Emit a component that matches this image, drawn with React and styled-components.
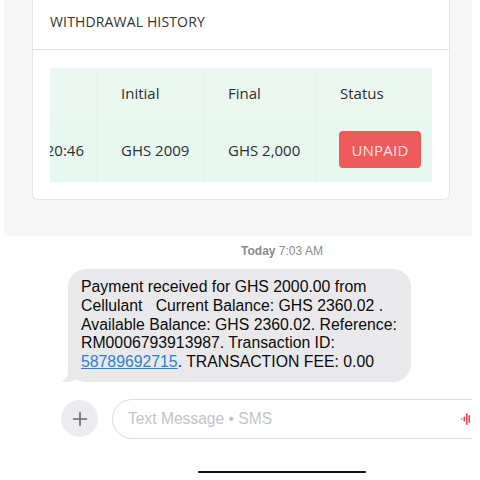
// Packages
import React from "react"
import styled, { createGlobalStyle } from "styled-components"

// Styles
const GlobalStyle = createGlobalStyle`
    html, body {
        margin: 0;
        padding: 0;
        background: #ffffff;
    }
`

const Screen = styled.div`
    width: 468px;
    height: 480px;
    margin-left: 4px;
    overflow: hidden;
    display: flex;
    flex-direction: column;
`

const WebPanel = styled.section`
    background: #f7f7f7;
    padding: 0 22px 36px 28px;
`

const Card = styled.div`
    background: #ffffff;
    border: 1px solid #e6e6e6;
    border-top: none;
    border-radius: 0 0 6px 6px;
    font-family: "Open Sans", "Liberation Sans", sans-serif;
    color: #2e2e2e;
`

const CardHeader = styled.h2`
    margin: 0;
    padding: 14px 17px 19px;
    font-size: 14px;
    line-height: 16px;
    font-weight: 400;
    letter-spacing: 0.15px;
    color: #333333;
    border-bottom: 1px solid #e2e2e2;
`

const CardBody = styled.div`
    padding: 18px 17px 17px;
`

const TableScroll = styled.div`
    display: flex;
    justify-content: flex-end;
    overflow: hidden;
    background: #e7f8f0;
`

const Table = styled.div`
    flex-shrink: 0;
    display: grid;
    grid-template-columns: auto 107px 112px 116px;
    grid-template-rows: 49px 65px;
`

const Cell = styled.div`
    display: flex;
    align-items: center;
    padding: ${(props) => (props.first ? "0 12px 0 24px" : "0 0 0 24px")};
    font-size: 15px;
    white-space: nowrap;
    color: #2e2e2e;
    border-right: 1px solid rgba(0, 80, 40, ${(props) => (props.last ? 0 : 0.025)});
    background: ${(props) => (props.head ? "rgba(255, 255, 255, 0.12)" : "transparent")};
`

const StatusBadge = styled.span`
    display: inline-flex;
    align-items: center;
    justify-content: center;
    width: 82px;
    height: 37px;
    margin-left: -1px;
    border-radius: 4px;
    background: #ef5a5b;
    color: #fde3e3;
    font-size: 15px;
    letter-spacing: 0.2px;
`

const Messages = styled.section`
    flex: 1;
    display: flex;
    flex-direction: column;
    width: 476px;
    margin-left: 40px;
    font-family: "Liberation Sans", Arial, sans-serif;
`

const Timestamp = styled.div`
    margin-top: 8px;
    text-align: center;
    font-size: 12px;
    line-height: 14px;
    color: #8a8a8e;

    strong {
        font-weight: 600;
    }
`

const Bubble = styled.div`
    position: relative;
    align-self: flex-start;
    box-sizing: border-box;
    width: 343px;
    margin: 11px 0 0 24px;
    padding: 9px 10px 10px 13px;
    border-radius: 18px;
    background: #e9e9eb;
    color: #0b0b0b;
    font-size: 15.8px;
    line-height: 18.8px;
    white-space: pre;

    &::before {
        content: "";
        position: absolute;
        left: -5px;
        bottom: 0;
        width: 20px;
        height: 18px;
        background: #e9e9eb;
        border-bottom-right-radius: 15px;
    }

    &::after {
        content: "";
        position: absolute;
        left: -10px;
        bottom: 0;
        width: 10px;
        height: 18px;
        background: #ffffff;
        border-bottom-right-radius: 10px;
    }
`

const BubbleText = styled.span`
    position: relative;
    z-index: 1;
`

const Link = styled.a`
    color: #2f7fd0;
    text-decoration: underline;
`

const Composer = styled.div`
    display: flex;
    align-items: center;
    gap: 14px;
    margin: 17px 0 0 17px;
`

const AddButton = styled.button`
    flex-shrink: 0;
    display: flex;
    align-items: center;
    justify-content: center;
    width: 37px;
    height: 37px;
    padding: 0;
    border: none;
    border-radius: 50%;
    background: #ececee;
`

const InputPill = styled.div`
    display: flex;
    align-items: center;
    justify-content: space-between;
    box-sizing: border-box;
    width: 380px;
    height: 40px;
    padding: 0 20px 0 15px;
    border: 1px solid #dadadc;
    border-radius: 20px;
`

const Placeholder = styled.span`
    font-size: 15.6px;
    color: #c4c4c8;
`

const HomeBar = styled.div`
    width: 168px;
    height: 2px;
    margin: auto 0 7px 154px;
    border-radius: 1px;
    background: #111111;
`

function Waveform() {
    return (
        <svg width="10" height="14" viewBox="0 0 10 14">
            <rect x="0" y="6" width="1.6" height="2" rx="0.8" fill="#f08080" />
            <rect x="2.5" y="4.5" width="1.6" height="5" rx="0.8" fill="#e5484d" />
            <rect x="5" y="1" width="1.6" height="12" rx="0.8" fill="#e5484d" />
            <rect x="7.5" y="3" width="1.6" height="8" rx="0.8" fill="#e5484d" />
        </svg>
    )
}

function App() {
    return (
        <Screen>
            <GlobalStyle />

            <WebPanel>
                <Card>
                    <CardHeader>WITHDRAWAL HISTORY</CardHeader>

                    <CardBody>
                        <TableScroll>
                            <Table>
                                <Cell first head>Date</Cell>
                                <Cell head>Initial</Cell>
                                <Cell head>Final</Cell>
                                <Cell head last>Status</Cell>

                                <Cell first>2023-03-14 20:46</Cell>
                                <Cell>GHS 2009</Cell>
                                <Cell>GHS 2,000</Cell>
                                <Cell last>
                                    <StatusBadge>UNPAID</StatusBadge>
                                </Cell>
                            </Table>
                        </TableScroll>
                    </CardBody>
                </Card>
            </WebPanel>

            <Messages>
                <Timestamp>
                    <strong>Today</strong> 7:03 AM
                </Timestamp>

                <Bubble>
                    <BubbleText>
                        {"Payment received for GHS 2000.00 from\n"}
                        {"Cellulant   Current Balance: GHS 2360.02 .\n"}
                        {"Available Balance: GHS 2360.02. Reference:\n"}
                        {"RM0006793913987. Transaction ID:\n"}
                        <Link>58789692715</Link>
                        {". TRANSACTION FEE: 0.00"}
                    </BubbleText>
                </Bubble>

                <Composer>
                    <AddButton aria-label="Add">
                        <svg width="16" height="16" viewBox="0 0 16 16">
                            <path
                                d="M8 1.5v13M1.5 8h13"
                                stroke="#6b6b6f"
                                strokeWidth="1.6"
                                strokeLinecap="round"
                            />
                        </svg>
                    </AddButton>

                    <InputPill>
                        <Placeholder>Text Message • SMS</Placeholder>
                        <Waveform />
                    </InputPill>
                </Composer>

                <HomeBar />
            </Messages>
        </Screen>
    )
}

export default App
